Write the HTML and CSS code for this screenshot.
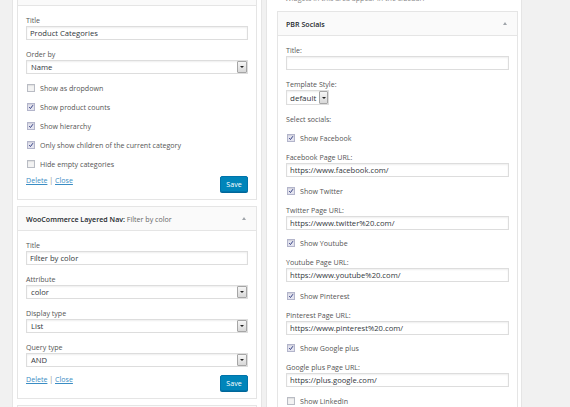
FILE: index.html
```html
<!DOCTYPE html>
<html lang="en">
<head>
<meta charset="utf-8">
<title>Widgets</title>
<link rel="stylesheet" href="styles.css">
</head>
<body>
<div class="page">
  <div class="sidebar sidebar-left">
    <div class="widget">
      <div class="widget-top"><span class="arrow"></span></div>
      <div class="widget-inside">
        <div class="field"><label>Title</label><input class="text" type="text" value="Product Categories"></div>
        <div class="field"><label>Order by</label><div class="select"><span class="val">Name</span><span class="btn"><span class="tri"></span></span></div></div>
        <div class="cb-row first"><span class="cb"></span><span>Show as dropdown</span></div>
        <div class="cb-row"><span class="cb checked"><svg viewBox="0 0 8 8"><path d="M1.6 4.2 L3.3 6 L6.6 1.6" fill="none" stroke="#2f3c7e" stroke-width="1.3"/></svg></span><span>Show product counts</span></div>
        <div class="cb-row"><span class="cb checked"><svg viewBox="0 0 8 8"><path d="M1.6 4.2 L3.3 6 L6.6 1.6" fill="none" stroke="#2f3c7e" stroke-width="1.3"/></svg></span><span>Show hierarchy</span></div>
        <div class="cb-row"><span class="cb checked"><svg viewBox="0 0 8 8"><path d="M1.6 4.2 L3.3 6 L6.6 1.6" fill="none" stroke="#2f3c7e" stroke-width="1.3"/></svg></span><span>Only show children of the current category</span></div>
        <div class="cb-row"><span class="cb"></span><span>Hide empty categories</span></div>
        <div class="actions tight"><div class="links"><a href="#">Delete</a> <span class="sep">|</span> <a href="#">Close</a></div><button class="save">Save</button></div>
      </div>
    </div>

    <div class="widget">
      <div class="widget-top"><h3>WooCommerce Layered Nav: <span class="sub">Filter by color</span></h3><span class="arrow"></span></div>
      <div class="widget-inside">
        <div class="field"><label>Title</label><input class="text" type="text" value="Filter by color"></div>
        <div class="field"><label>Attribute</label><div class="select"><span class="val">color</span><span class="btn"><span class="tri"></span></span></div></div>
        <div class="field"><label>Display type</label><div class="select"><span class="val">List</span><span class="btn"><span class="tri"></span></span></div></div>
        <div class="field"><label>Query type</label><div class="select"><span class="val">AND</span><span class="btn"><span class="tri"></span></span></div></div>
        <div class="actions"><div class="links"><a href="#">Delete</a> <span class="sep">|</span> <a href="#">Close</a></div><button class="save">Save</button></div>
      </div>
    </div>

    <div class="widget">
      <div class="widget-top"></div>
    </div>
  </div>

  <div class="sidebar sidebar-right">
    <p class="desc">Widgets in this area appear in the sidebar.</p>
    <div class="widget">
      <div class="widget-top"><h3>PBR Socials</h3><span class="arrow"></span></div>
      <div class="widget-inside">
        <div class="field"><label>Title:</label><input class="text" type="text" value=""></div>
        <div class="field"><label>Template Style:</label><div class="select small"><span class="val">default</span><span class="btn"><span class="tri"></span></span></div></div>
        <p class="note">Select socials:</p>
        <div class="cb-row social"><span class="cb checked"><svg viewBox="0 0 8 8"><path d="M1.6 4.2 L3.3 6 L6.6 1.6" fill="none" stroke="#2f3c7e" stroke-width="1.3"/></svg></span><span>Show Facebook</span></div>
        <div class="field url"><label>Facebook Page URL:</label><input class="text" type="text" value="https://www.facebook.com/"></div>
        <div class="cb-row social"><span class="cb checked"><svg viewBox="0 0 8 8"><path d="M1.6 4.2 L3.3 6 L6.6 1.6" fill="none" stroke="#2f3c7e" stroke-width="1.3"/></svg></span><span>Show Twitter</span></div>
        <div class="field url"><label>Twitter Page URL:</label><input class="text" type="text" value="https://www.twitter%20.com/"></div>
        <div class="cb-row social"><span class="cb checked"><svg viewBox="0 0 8 8"><path d="M1.6 4.2 L3.3 6 L6.6 1.6" fill="none" stroke="#2f3c7e" stroke-width="1.3"/></svg></span><span>Show Youtube</span></div>
        <div class="field url"><label>Youtube Page URL:</label><input class="text" type="text" value="https://www.youtube%20.com/"></div>
        <div class="cb-row social"><span class="cb checked"><svg viewBox="0 0 8 8"><path d="M1.6 4.2 L3.3 6 L6.6 1.6" fill="none" stroke="#2f3c7e" stroke-width="1.3"/></svg></span><span>Show Pinterest</span></div>
        <div class="field url"><label>Pinterest Page URL:</label><input class="text" type="text" value="https://www.pinterest%20.com/"></div>
        <div class="cb-row social"><span class="cb checked"><svg viewBox="0 0 8 8"><path d="M1.6 4.2 L3.3 6 L6.6 1.6" fill="none" stroke="#2f3c7e" stroke-width="1.3"/></svg></span><span>Show Google plus</span></div>
        <div class="field url"><label>Google plus Page URL:</label><input class="text" type="text" value="https://plus.google.com/"></div>
        <div class="cb-row social"><span class="cb"></span><span>Show LinkedIn</span></div>
      </div>
    </div>
  </div>
</div>
</body>
</html>
```

FILE: styles.css
```css
* { box-sizing: border-box; }

html, body {
  margin: 0;
  height: 407px;
  overflow: hidden;
}

body {
  background: #f1f1f1;
  font-family: "Open Sans", "Noto Sans", sans-serif;
  font-size: 7.1px;
  color: #555;
}

.page {
  display: flex;
  align-items: flex-start;
  gap: 4px;
  padding-left: 12px;
}

.sidebar {
  background: #fff;
  border: 1px solid #e5e5e5;
}

.sidebar-left {
  width: 250px;
  margin-top: -20px;
  padding: 0 4px;
}

.sidebar-right {
  width: 256px;
  margin-top: -9px;
  padding: 0 3px 0 10px;
}

.desc {
  margin: 0 0 7px;
  line-height: 12px;
  color: #888;
  padding-left: 8px;
}

.widget {
  background: #fff;
  border: 1px solid #e5e5e5;
  margin-bottom: 6px;
}

.widget-top {
  height: 24px;
  background: #fafafa;
  border-bottom: 1px solid #e5e5e5;
  display: flex;
  align-items: center;
  justify-content: space-between;
  padding: 0 10px 0 8px;
}

.widget-top .arrow { margin-left: auto; }

.widget-top h3 {
  margin: 0;
  font-size: 7.1px;
  font-weight: 600;
  color: #23282d;
  line-height: 12px;
}

.widget-top .sub {
  font-weight: 400;
  color: #666;
}

.arrow {
  width: 0;
  height: 0;
  border-left: 2.5px solid transparent;
  border-right: 2.5px solid transparent;
  border-bottom: 3px solid #a0a5aa;
}

.widget-inside {
  padding: 8px 8px 7px;
}

.field + .field { margin-top: 8px; }

.field label {
  display: block;
  line-height: 12px;
  height: 12px;
  color: #555;
}

input.text {
  display: block;
  width: 100%;
  height: 14px;
  margin: 0;
  padding: 0 3px;
  border: 1px solid #ddd;
  box-shadow: inset 0 1px 2px rgba(0,0,0,0.07);
  background: #fff;
  font-family: "Open Sans", "Noto Sans", sans-serif;
  font-size: 7.65px;
  color: #32373c;
  outline: none;
}

.select {
  display: flex;
  align-items: stretch;
  height: 14px;
  border: 1px solid #ddd;
  box-shadow: inset 0 1px 2px rgba(0,0,0,0.07);
  background: #fff;
}

.select .val {
  flex: 1;
  padding-left: 4px;
  font-size: 7.65px;
  line-height: 12px;
  color: #32373c;
}

.select .btn {
  width: 10px;
  border: 1px solid #a6a6a6;
  border-radius: 1px;
  background: linear-gradient(#f6f6f6, #d8d8d8);
  display: flex;
  align-items: center;
  justify-content: center;
}

.tri {
  width: 0;
  height: 0;
  border-left: 2px solid transparent;
  border-right: 2px solid transparent;
  border-top: 2.5px solid #222;
}

.select.small {
  width: 43px;
  height: 15px;
}

.select.small .val {
  font-size: 8px;
  line-height: 13px;
  padding-left: 3px;
}

.select.small .btn {
  width: 9px;
}

.note {
  margin: 8px 0 0;
  line-height: 12px;
}

.cb-row {
  display: flex;
  align-items: center;
  gap: 5px;
  height: 12px;
  line-height: 12px;
  margin-top: 7px;
  color: #555;
}

.cb-row.first { margin-top: 8px; }

.cb {
  width: 8px;
  height: 8px;
  margin-left: 1px;
  border: 1px solid #b9bcc4;
  background: #f3f3f3;
  box-shadow: inset 0 1px 1px rgba(0,0,0,0.08);
  display: flex;
}

.cb.checked {
  background: #e4e4ef;
  border-color: #b3b5cb;
}

.cb svg {
  width: 6px;
  height: 6px;
}

.field.url { margin-top: 7px; }
.field.url + .cb-row.social { margin-top: 7.6px; }

.actions {
  display: flex;
  justify-content: space-between;
  align-items: flex-start;
  margin-top: 8px;
}

.actions.tight { margin-top: 6px; }

.links {
  margin-top: -2px;
  line-height: 12px;
}

.links a {
  color: #3b8dc4;
  text-decoration: underline;
}

.links .sep {
  color: #888;
}

.save {
  width: 28px;
  height: 16px;
  padding: 0;
  margin: 0;
  background: #0085ba;
  border: 1px solid #0073aa;
  border-radius: 2px;
  box-shadow: 0 1px 0 #006799;
  color: #fff;
  font-family: "Open Sans", "Noto Sans", sans-serif;
  font-size: 7.1px;
}
```
